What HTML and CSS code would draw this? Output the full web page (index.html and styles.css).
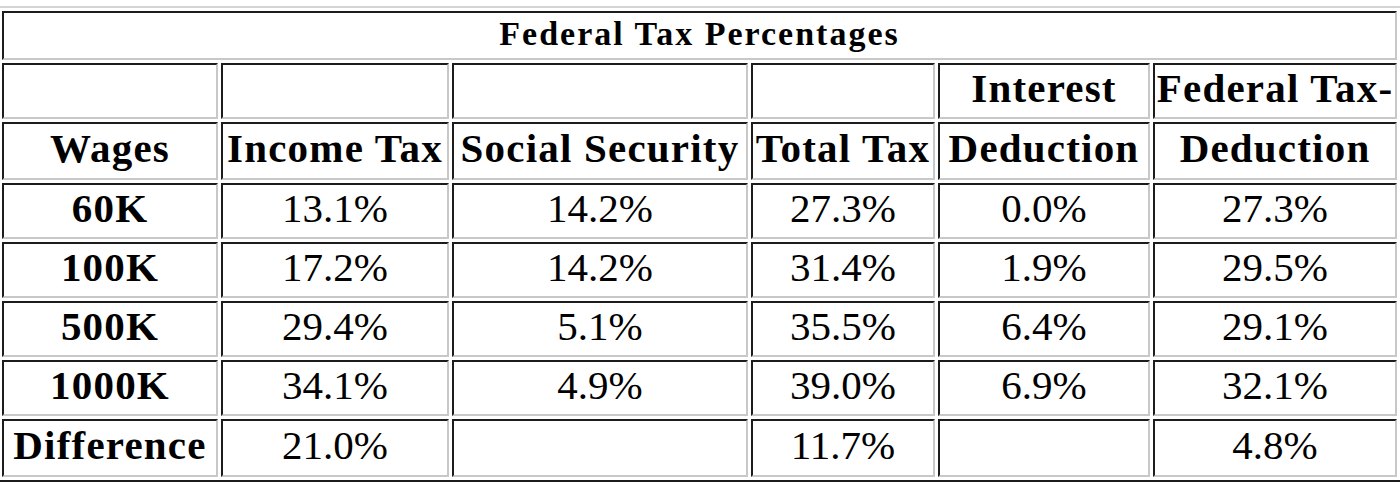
FILE: index.html
```html
<!DOCTYPE html>
<html lang="en">
<head>
<meta charset="utf-8">
<title>Federal Tax Percentages</title>
<link rel="stylesheet" href="styles.css">
</head>
<body>
<table class="tax">
  <colgroup>
    <col class="c1"><col class="c2"><col class="c3"><col class="c4"><col class="c5"><col class="c6">
  </colgroup>
  <tr class="r-title"><th class="title" colspan="6">Federal Tax Percentages</th></tr>
  <tr class="r-h1"><th></th><th></th><th></th><th></th><th>Interest</th><th>Federal Tax-</th></tr>
  <tr class="r-h2"><th>Wages</th><th>Income Tax</th><th>Social Security</th><th>Total Tax</th><th>Deduction</th><th>Deduction</th></tr>
  <tr class="r-d"><th>60K</th><td>13.1%</td><td>14.2%</td><td>27.3%</td><td>0.0%</td><td>27.3%</td></tr>
  <tr class="r-d"><th>100K</th><td>17.2%</td><td>14.2%</td><td>31.4%</td><td>1.9%</td><td>29.5%</td></tr>
  <tr class="r-d"><th>500K</th><td>29.4%</td><td>5.1%</td><td>35.5%</td><td>6.4%</td><td>29.1%</td></tr>
  <tr class="r-d"><th>1000K</th><td>34.1%</td><td>4.9%</td><td>39.0%</td><td>6.9%</td><td>32.1%</td></tr>
  <tr class="r-last"><th>Difference</th><td>21.0%</td><td></td><td>11.7%</td><td></td><td>4.8%</td></tr>
</table>
</body>
</html>
```

FILE: styles.css
```css
html, body {
  margin: 0;
  padding: 0;
  background: #ffffff;
}

.tax {
  margin: 6px 0 0 -3px;
  table-layout: fixed;
  width: 1405px;
  border-collapse: separate;
  border-spacing: 3px;
  border: 2px solid;
  border-color: #d4d4d4 #1c1c1c #1c1c1c #d4d4d4;
  font-family: "Liberation Serif", "Times New Roman", serif;
  color: #000;
}

.c1 { width: 216px; }
.c2 { width: 228px; }
.c3 { width: 296px; }
.c4 { width: 184px; }
.c5 { width: 212px; }
.c6 { width: 244px; }

.tax th,
.tax td {
  box-sizing: border-box;
  border: 2px solid;
  border-color: #1c1c1c #c8c8c8 #c8c8c8 #1c1c1c;
  padding: 0 0 4px;
  text-align: center;
  vertical-align: middle;
  white-space: nowrap;
  line-height: 1.1;
}

.tax th {
  font-weight: bold;
  font-size: 41px;
  letter-spacing: 1.2px;
}

.tax td {
  font-weight: normal;
  font-size: 41px;
}

.tax th.title {
  font-size: 34px;
  letter-spacing: 2px;
  padding-bottom: 3px;
}

.r-title > * { height: 49px; }
.r-h1 > * { height: 56px; }
.r-h2 > * { height: 58px; }
.r-d > * { height: 56px; }
.r-last > * { height: 58px; }
```
